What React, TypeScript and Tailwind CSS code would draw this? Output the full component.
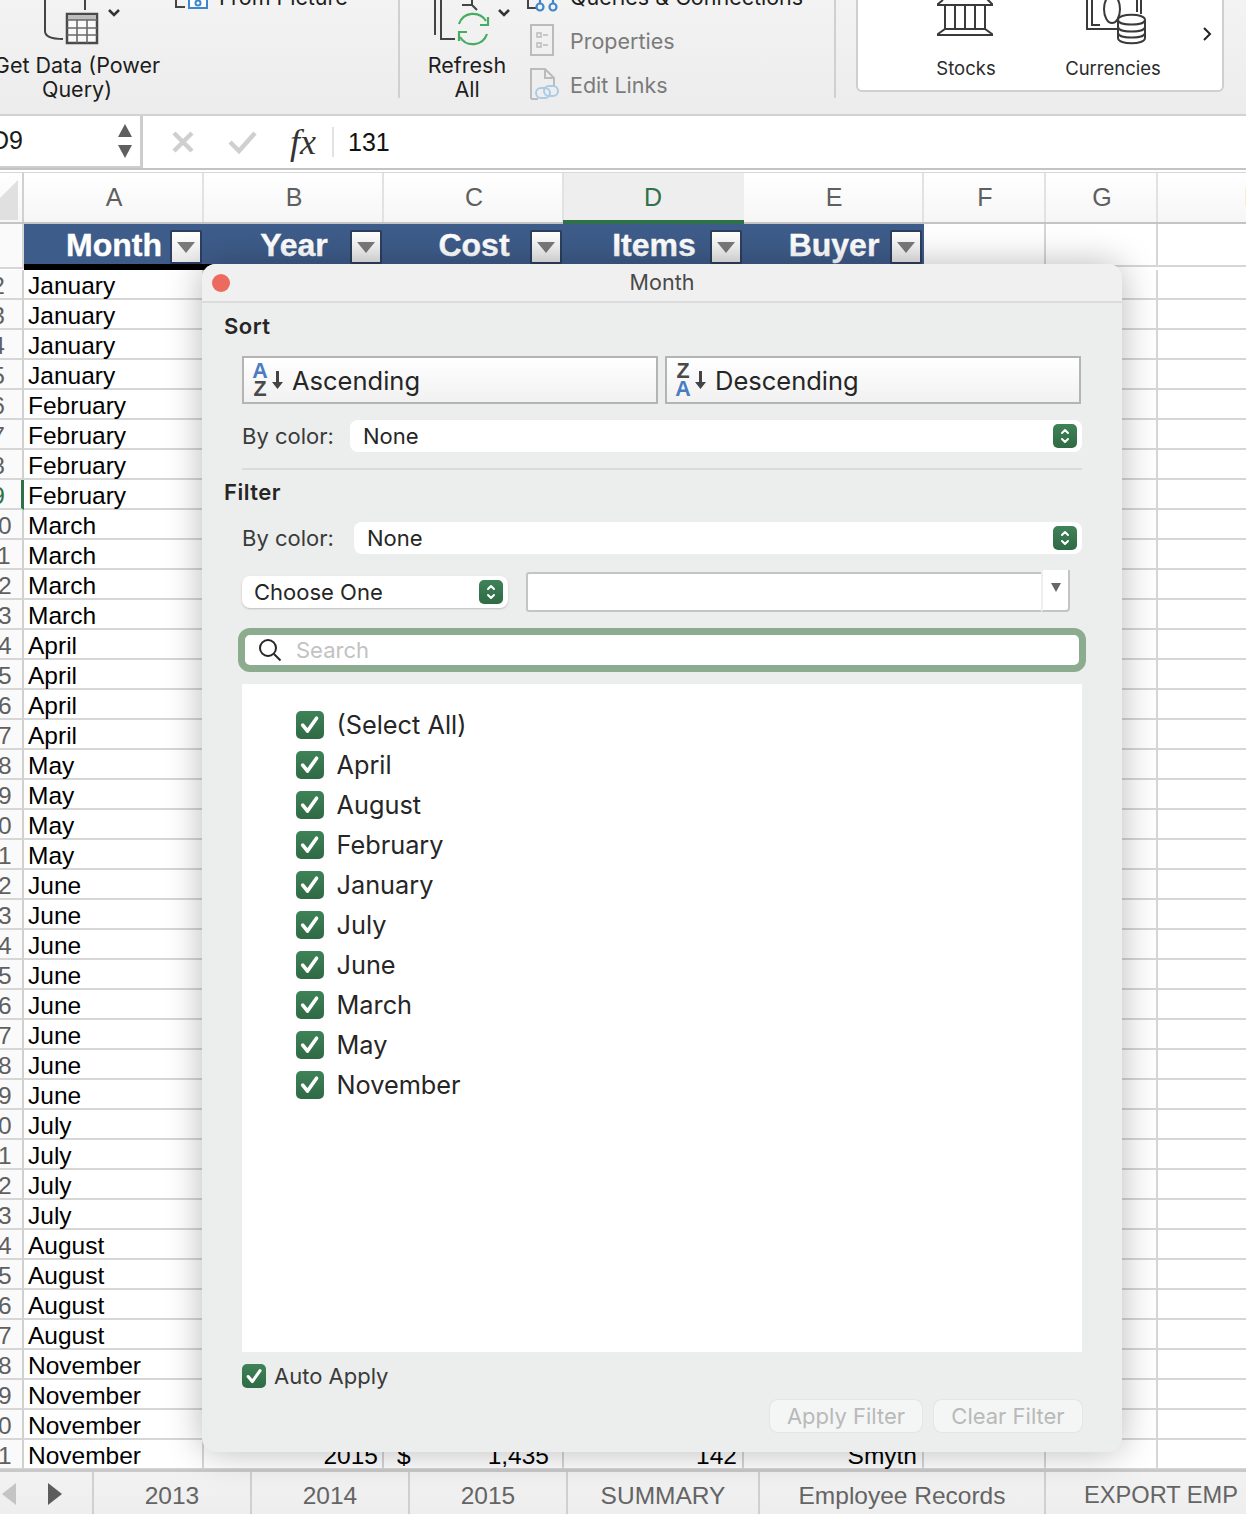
import React from 'react';

const months = [
  'January', 'January', 'January', 'January',
  'February', 'February', 'February', 'February',
  'March', 'March', 'March', 'March',
  'April', 'April', 'April', 'April',
  'May', 'May', 'May', 'May',
  'June', 'June', 'June', 'June', 'June', 'June', 'June', 'June',
  'July', 'July', 'July', 'July',
  'August', 'August', 'August', 'August',
  'November', 'November', 'November', 'November',
];

const filterItems = ['(Select All)', 'April', 'August', 'February', 'January', 'July', 'June', 'March', 'May', 'November'];

const columns = [
  { key: 'A', w: 'w-[180px]' },
  { key: 'B', w: 'w-[180px]' },
  { key: 'C', w: 'w-[180px]' },
  { key: 'D', w: 'w-[180px]' },
  { key: 'E', w: 'w-[180px]' },
  { key: 'F', w: 'w-[122px]' },
  { key: 'G', w: 'w-[112px]' },
  { key: 'H', w: 'w-[190px]' },
];

const tableHeaders = ['Month', 'Year', 'Cost', 'Items', 'Buyer'];
const tabs = [
  { label: '2013', w: 'w-[158px]', size: 'text-[24.500px]' },
  { label: '2014', w: 'w-[158px]', size: 'text-[24.500px]' },
  { label: '2015', w: 'w-[158px]', size: 'text-[24.500px]' },
  { label: 'SUMMARY', w: 'w-[192px]', size: 'text-[24.500px]' },
  { label: 'Employee Records', w: 'w-[286px]', size: 'text-[24.500px]' },
  { label: 'EXPORT EMP', w: 'w-[230px]', size: 'text-[23.600px]' },
];

function Stepper() {
  return (
    <span className="flex h-[24px] w-[24px] shrink-0 items-center justify-center rounded-[5px] bg-gradient-to-b from-[#3f8258] to-[#2f6a45]">
      <svg width="12" height="18" viewBox="0 0 12 18" fill="none" stroke="#fff" strokeWidth="2" strokeLinecap="round" strokeLinejoin="round">
        <path d="M3 6l3-3 3 3M3 12l3 3 3-3" />
      </svg>
    </span>
  );
}

function Check({ size }: { size: string }) {
  return (
    <span className={`flex shrink-0 items-center justify-center rounded-[5px] bg-gradient-to-b from-[#3f8258] to-[#2f6a45] ${size}`}>
      <svg className="h-[76%] w-[76%]" viewBox="0 0 20 20" fill="none" stroke="#fff" strokeWidth="3.4" strokeLinecap="round" strokeLinejoin="round">
        <path d="M3.5 10.5l4.5 5.5 8.5-12" />
      </svg>
    </span>
  );
}

function SortIcon({ top, bottom }: { top: string; bottom: string }) {
  return (
    <span className="flex items-center">
      <span className="flex w-[16px] flex-col items-center font-['Liberation_Sans',sans-serif] text-[21.500px] font-bold leading-[18px]">
        <span className={top === 'A' ? 'text-[#4a7cc0]' : 'text-[#4a4a4a]'}>{top}</span>
        <span className={bottom === 'A' ? 'text-[#4a7cc0]' : 'text-[#4a4a4a]'}>{bottom}</span>
      </span>
      <svg className="ml-[3px]" width="13" height="20" viewBox="0 0 13 20" fill="#444">
        <path d="M5 1h3v11h4l-5.500 7L1 12h4z" />
      </svg>
    </span>
  );
}

function Ribbon() {
  return (
    <div className="flex h-[116px] shrink-0 overflow-hidden border-b-2 border-[#d2d2d2] bg-gradient-to-b from-[#f3f3f3] to-[#ececec] text-[21.500px] leading-[24px] text-[#1d1d1d]">
      <div className="flex h-[98px] w-[400px] shrink-0 border-r-2 border-[#d0d0d0]">
        <div className="-ml-[8px] w-[170px] shrink-0 text-center">
          <svg className="block" width="170" height="53" viewBox="-8 0 170 53" fill="none">
            <path d="M45 0v31q0 8 18 8" stroke="#444" strokeWidth="2" />
            <path d="M85 0v10" stroke="#444" strokeWidth="2" />
            <rect x="67" y="14" width="30" height="29" fill="#fafafa" stroke="#4a4a4a" strokeWidth="2.500" />
            <rect x="68" y="15" width="28" height="5" fill="#bdbdbd" />
            <path d="M67 20h30M67 28h30M67 35h30M77 20v23M87 20v23" stroke="#6a6a6a" strokeWidth="1.600" />
            <path d="M109 10l5 5 5-5" stroke="#333" strokeWidth="2.500" />
          </svg>
          <div className="whitespace-nowrap">Get Data (Power</div>
          <div>Query)</div>
        </div>
        <div className="ml-[13px] -mt-[15px] flex h-[24px] items-center">
          <svg className="overflow-visible" width="34" height="24" viewBox="0 0 34 24" fill="none">
            <path d="M1 0v22h9" stroke="#444" strokeWidth="2" />
            <rect x="14" y="8" width="18" height="15" fill="#fff" stroke="#3f86cf" strokeWidth="2" />
            <circle cx="23" cy="18" r="2.500" stroke="#3f86cf" strokeWidth="2" />
          </svg>
          <span className="ml-[10px] whitespace-nowrap">From Picture</span>
        </div>
      </div>
      <div className="flex h-[98px] w-[436px] shrink-0 border-r-2 border-[#d0d0d0]">
        <div className="w-[132px] shrink-0">
          <svg className="block" width="132" height="53" viewBox="400 0 132 53" fill="none">
            <path d="M435 0v35M441 0v39h14" stroke="#444" strokeWidth="2" />
            <path d="M462 5h10M472 0v5l5 5" stroke="#444" strokeWidth="2" />
            <path d="M459 24a15 15 0 0 1 27-3M487 34a15 15 0 0 1-27 3" stroke="#46ad62" strokeWidth="2.200" />
            <path d="M488 17v8h-8M459 41v-9h8" stroke="#46ad62" strokeWidth="2.200" />
            <path d="M499 10l5 5 5-5" stroke="#333" strokeWidth="2.500" />
          </svg>
          <div className="w-[134px] text-center">Refresh</div>
          <div className="w-[134px] text-center">All</div>
        </div>
        <div className="-mt-[15px] flex flex-col gap-[20px] text-[#7b7b7b]">
          <div className="flex h-[24px] items-center text-[#1d1d1d]">
            <svg className="overflow-visible" width="38" height="24" viewBox="0 0 38 24" fill="none">
              <path d="M-4 0v23h8M-4 12h8" stroke="#444" strokeWidth="2" />
              <circle cx="8" cy="22" r="3.500" stroke="#3f86cf" strokeWidth="2.200" />
              <circle cx="21" cy="22" r="3.500" stroke="#3f86cf" strokeWidth="2.200" />
              <path d="M8 18v-4h13v4" stroke="#3f86cf" strokeWidth="2.200" />
            </svg>
            <span className="whitespace-nowrap">Queries &amp; Connections</span>
          </div>
          <div className="flex h-[24px] items-center">
            <svg className="shrink-0 overflow-visible" width="38" height="32" viewBox="532 25 38 32" fill="none">
              <rect x="531" y="25" width="22" height="30" stroke="#bbb" strokeWidth="2" />
              <path d="M537 33h4v4h-4zM537 43h4v4h-4z" stroke="#bbb" strokeWidth="1.500" />
              <path d="M543 35h5M543 45h5" stroke="#bbb" strokeWidth="1.500" />
            </svg>
            <span className="whitespace-nowrap">Properties</span>
          </div>
          <div className="flex h-[24px] items-center">
            <svg className="shrink-0 overflow-visible" width="38" height="34" viewBox="532 68 38 34" fill="none">
              <path d="M531 99V69h14l9 9v8M545 69v9h9M531 99h7" stroke="#bbb" strokeWidth="2" />
              <rect x="536" y="88" width="14" height="10" rx="5" stroke="#a9cbe8" strokeWidth="2" />
              <rect x="544" y="86" width="14" height="10" rx="5" stroke="#a9cbe8" strokeWidth="2" />
            </svg>
            <span className="whitespace-nowrap">Edit Links</span>
          </div>
        </div>
      </div>
      <div className="ml-[20px] flex h-[92px] w-[368px] shrink-0 rounded-b-[6px] border-x-2 border-b-2 border-[#cfcfcf] bg-white text-[18.500px] text-[#2b2b2b]">
        <div className="w-[216px] text-center">
          <svg className="block" width="216" height="56" viewBox="858 0 216 56" fill="none" stroke="#3a3a3a" strokeWidth="2">
            <path d="M943 0l-5 4v1h54V4l-5-5M945 5v24M955 5v24M965 5v24M975 5v24M985 5v24M945 29h40l7 5v1h-54v-1z" />
          </svg>
          <div className="leading-[24px]">Stocks</div>
        </div>
        <div className="w-[76px] text-center">
          <svg className="block overflow-visible" width="76" height="56" viewBox="1074 0 76 56" fill="none" stroke="#3a3a3a" strokeWidth="2">
            <path d="M1087 0v29h30M1092 0v25h8M1141 0v14M1137 0v12" />
            <ellipse cx="1112" cy="9" rx="8" ry="14" />
            <path d="M1118 20c0-7 27-7 27 0v18c0 7-27 7-27 0z" fill="#fff" />
            <path d="M1118 20c0 6 27 6 27 0M1118 27c0 6 27 6 27 0M1118 33c0 6 27 6 27 0" />
          </svg>
          <div className="-ml-[39px] w-[156px] leading-[24px]">Currencies</div>
        </div>
        <svg className="ml-[51px] mt-[26px]" width="12" height="16" viewBox="0 0 12 16" fill="none" stroke="#222" strokeWidth="2">
          <path d="M3 2l6 6-6 6" />
        </svg>
      </div>
    </div>
  );
}

function FormulaBar() {
  return (
    <div className="flex h-[52px] shrink-0 bg-white font-['Liberation_Sans',sans-serif]">
      <div className="relative flex w-[143px] shrink-0 items-center border-r-[3px] border-b-2 border-[#cdcdcd]">
        <span className="-ml-[9px] text-[25px] text-[#1a1a1a]">D9</span>
        <div className="ml-auto mr-[8px] flex flex-col gap-[8px]">
          <svg width="14" height="13" viewBox="0 0 14 13" fill="#5f5f5f"><path d="M7 0l7 13H0z" /></svg>
          <svg width="14" height="13" viewBox="0 0 14 13" fill="#5f5f5f"><path d="M7 13L14 0H0z" /></svg>
        </div>
      </div>
      <div className="flex flex-1 items-center">
        <svg className="ml-[28px]" width="24" height="24" viewBox="0 0 24 24" fill="none" stroke="#cfcfcf" strokeWidth="4.500">
          <path d="M3 3l18 18M21 3L3 21" />
        </svg>
        <svg className="ml-[33px]" width="30" height="24" viewBox="0 0 30 24" fill="none" stroke="#cfcfcf" strokeWidth="4.500">
          <path d="M2 12l9 9L27 3" />
        </svg>
        <span className="ml-[32px] w-[32px] font-['Liberation_Serif',serif] text-[36px] italic leading-none text-[#333]">fx</span>
        <span className="ml-[10px] h-[30px] w-[2px] bg-[#e2e2e2]" />
        <span className="ml-[14px] pt-[2px] text-[25px] text-[#111]">131</span>
      </div>
    </div>
  );
}

function ColumnHeaders() {
  return (
    <>
      <div className="h-[4px] shrink-0 border-t-2 border-[#c4c4c4] bg-white" />
      <div className="flex h-[52px] shrink-0 border-t border-b-2 border-t-[#d8d8d8] border-b-[#c4c4c4] bg-gradient-to-b from-white to-[#f6f6f6] font-['Liberation_Sans',sans-serif] text-[25px] text-[#5f5f5f]">
        <div className="flex w-[24px] shrink-0 items-center border-r-2 border-[#d0d0d0]">
          <svg width="18" height="46" viewBox="0 0 18 46" fill="#e0e0e0"><path d="M18 5v40H0V23z" /></svg>
        </div>
        {columns.map((c) => (
          <div
            key={c.key}
            className={`flex shrink-0 items-center justify-center border-r-2 pt-[1px] ${c.w} ${
              c.key === 'D' ? 'relative border-[#eeeeee] bg-[#eeeeee] text-[#2f7148]' : 'border-[#e2e2e2] pl-[2px]'
            }`}
          >
            {c.key}
            {c.key === 'D' && <span className="absolute -bottom-[2px] -left-[1px] -right-[2px] h-[4px] bg-[#2f7148]" />}
          </div>
        ))}
      </div>
    </>
  );
}

function RowNumber({ n, active }: { n: number; active?: boolean }) {
  return (
    <div
      className={`h-full w-[24px] shrink-0 overflow-hidden border-b-2 border-b-[#d6d6d6] bg-[#fafafa] ${
        active ? 'border-r-[3px] border-r-[#2f7148] text-[#2f7148]' : 'border-r-2 border-r-[#d0d0d0] text-[#5f5f5f]'
      }`}
    >
      <div className="-ml-[26px] w-[48px] text-center">{n}</div>
    </div>
  );
}

function TableHeaderRow() {
  return (
    <div className="flex h-[46px] shrink-0">
      <div className="h-[45px] w-[24px] shrink-0 border-r-2 border-b-2 border-[#d6d6d6] bg-[#fafafa]" />
      <div className="w-[900px] shrink-0">
        <div className="flex h-[40px] bg-[#3e5c8a] text-[32px] font-bold text-white [-webkit-text-stroke:0.4px_white]">
          {tableHeaders.map((h) => (
            <div key={h} className="relative flex w-[180px] items-center justify-center pt-[1px]">
              {h}
              <span className="absolute bottom-0 right-[2px] flex h-[34px] w-[32px] items-center justify-center rounded-[2px] border-2 border-[#2c3f60] bg-gradient-to-b from-white to-[#e9e9e9]">
                <svg width="18" height="11" viewBox="0 0 18 11" fill="#7a7a7a"><path d="M0 0h18l-9 11z" /></svg>
              </span>
            </div>
          ))}
        </div>
        <div className="h-[6px] bg-black" />
      </div>
      <div className="h-[43px] w-[122px] shrink-0 border-r-2 border-b-2 border-[#d6d6d6]" />
      <div className="h-[43px] w-[112px] shrink-0 border-r-2 border-b-2 border-[#d6d6d6]" />
      <div className="h-[43px] w-[190px] shrink-0 border-b-2 border-[#d6d6d6]" />
    </div>
  );
}

function Rows() {
  return (
    <div className="min-h-0 flex-1 overflow-hidden">
      {months.map((m, i) => {
        const isLast = i === months.length - 1;
        return (
          <div key={i} className="flex h-[30px] text-[24.500px] leading-[32px] text-black">
            <RowNumber n={i + 2} active={i === 7} />
            <div className="w-[180px] shrink-0 border-r-2 border-b-2 border-[#d6d6d6] pl-[4px]">{m}</div>
            <div className="w-[180px] shrink-0 border-r-2 border-b-2 border-[#d6d6d6] pr-[4px] text-right">{isLast ? '2015' : ''}</div>
            <div className="flex w-[180px] shrink-0 justify-between border-r-2 border-b-2 border-[#d6d6d6] px-[13px]">
              {isLast && (
                <>
                  <span>$</span>
                  <span>1,435</span>
                </>
              )}
            </div>
            <div className="w-[180px] shrink-0 border-r-2 border-b-2 border-[#d6d6d6] pr-[5px] text-right">{isLast ? '142' : ''}</div>
            <div className="w-[180px] shrink-0 border-r-2 border-b-2 border-[#d6d6d6] pr-[5px] text-right">{isLast ? 'Smyth' : ''}</div>
            <div className="w-[122px] shrink-0 border-r-2 border-b-2 border-[#d6d6d6]" />
            <div className="w-[112px] shrink-0 border-r-2 border-b-2 border-[#d6d6d6]" />
            <div className="w-[190px] shrink-0 border-b-2 border-[#d6d6d6]" />
          </div>
        );
      })}
    </div>
  );
}

function TabBar() {
  return (
    <div className="flex h-[45px] shrink-0 border-t-[3px] border-[#c9c9c9] bg-gradient-to-b from-[#f2f2f2] to-[#eeeeee] font-['Liberation_Sans',sans-serif] text-[#646464]">
      <div className="flex w-[94px] shrink-0 items-center border-r-2 border-[#d0d0d0] pl-[2px] pt-[2px]">
        <svg width="14" height="22" viewBox="0 0 14 22" fill="#c4c4c4"><path d="M14 0v22L0 11z" /></svg>
        <svg className="ml-[32px]" width="14" height="22" viewBox="0 0 14 22" fill="#5c5c5c"><path d="M0 0v22l14-11z" /></svg>
      </div>
      {tabs.map((t) => (
        <div key={t.label} className={`flex shrink-0 items-center justify-center border-r-2 border-[#d0d0d0] pt-[6px] last:border-r-0 ${t.w} ${t.size}`}>
          <span className="whitespace-nowrap">{t.label}</span>
        </div>
      ))}
    </div>
  );
}

function FilterDialog() {
  return (
    <div className="absolute left-[202px] top-[264px] flex h-[1188px] w-[920px] flex-col overflow-hidden rounded-[14px] bg-[#eceeed] font-['Inter',sans-serif] text-[#262626] shadow-[0_0_36px_rgba(0,0,0,0.28)]">
      <div className="relative flex h-[39px] shrink-0 items-center justify-center border-b-2 border-[#dcdcdc] bg-[#f0f0f0] text-[21.500px] text-[#4a4a4a]">
        <span className="absolute left-[10px] top-[10px] h-[18px] w-[18px] rounded-full bg-[#ec6a5e]" />
        Month
      </div>

      <div className="flex flex-1 flex-col pl-[22px] pr-[40px]">
        <div className="mt-[10px] text-[22px] font-semibold leading-[26px] tracking-[0.5px]">Sort</div>
        <div className="ml-[18px] mt-[17px] flex gap-[7px]">
          {[
            { label: 'Ascending', top: 'A', bottom: 'Z' },
            { label: 'Descending', top: 'Z', bottom: 'A' },
          ].map((b) => (
            <div key={b.label} className="flex h-[48px] w-[416px] items-center border-2 border-[#b4b4b4] bg-gradient-to-b from-white to-[#f1f1f1] pl-[8px] text-[25.500px]">
              <SortIcon top={b.top} bottom={b.bottom} />
              <span className="ml-[8px] pt-[2px]">{b.label}</span>
            </div>
          ))}
        </div>

        <div className="ml-[18px] mt-[16px] flex h-[32px] items-center text-[22px]">
          <span className="w-[108px] text-[#3a3a3a]">By color:</span>
          <div className="flex h-[32px] flex-1 items-center rounded-[8px] bg-white pl-[13px] pr-[5px]">
            <span className="flex-1">None</span>
            <Stepper />
          </div>
        </div>

        <div className="ml-[18px] mt-[16px] h-[2px] bg-[#dadcdb]" />
        <div className="mt-[9px] text-[22px] font-semibold leading-[26px] tracking-[0.5px]">Filter</div>

        <div className="ml-[18px] mt-[17px] flex h-[32px] items-center text-[22px]">
          <span className="w-[112px] text-[#3a3a3a]">By color:</span>
          <div className="flex h-[32px] flex-1 items-center rounded-[8px] bg-white pl-[13px] pr-[5px]">
            <span className="flex-1">None</span>
            <Stepper />
          </div>
        </div>

        <div className="ml-[18px] mt-[16px] flex h-[42px] items-start text-[22px]">
          <div className="mt-[6px] flex h-[32px] w-[266px] shrink-0 items-center rounded-[8px] bg-white pl-[12px] pr-[5px] shadow-[0_1px_2px_rgba(0,0,0,0.2)]">
            <span className="flex-1">Choose One</span>
            <Stepper />
          </div>
          <div className="ml-[18px] mt-[2px] h-[40px] w-[515px] rounded-l-[3px] border-y-2 border-l-2 border-[#c4c4c4] bg-white" />
          <div className="flex h-[42px] w-[29px] items-center justify-center rounded-br-[4px] border-r-2 border-b-2 border-l-2 border-r-[#c4c4c4] border-b-[#c4c4c4] border-l-[#eeeeee] bg-white pb-[6px]">
            <svg width="10" height="9" viewBox="0 0 10 9" fill="#666"><path d="M0 0h10L5 9z" /></svg>
          </div>
        </div>

        <div className="-mr-[4px] ml-[14px] mt-[16px] flex h-[44px] shrink-0 items-center rounded-[12px] border-[7px] border-[#8dab8f] bg-white pl-[13px] text-[22px] text-[#c2c2c2]">
          <svg width="24" height="24" viewBox="0 0 24 24" fill="none" stroke="#262626" strokeWidth="2">
            <circle cx="10" cy="10" r="8" />
            <path d="M16 16l6.500 6.500" />
          </svg>
          <span className="ml-[14px]">Search</span>
        </div>

        <div className="ml-[18px] mt-[12px] flex h-[668px] shrink-0 flex-col bg-white pl-[54px] pt-[21px]">
          {filterItems.map((item) => (
            <div key={item} className="flex h-[40px] shrink-0 items-center text-[25.300px]">
              <Check size="h-[28px] w-[28px]" />
              <span className="ml-[12.500px]">{item}</span>
            </div>
          ))}
        </div>

        <div className="ml-[18px] mt-[12px] flex h-[24px] items-center text-[22px] text-[#3a3a3a]">
          <Check size="h-[24px] w-[24px]" />
          <span className="ml-[8px]">Auto Apply</span>
        </div>

        <div className="mt-[12px] flex justify-end gap-[12px] text-[22px] text-[#b9b9b9]">
          <div className="flex h-[32px] w-[152px] items-center justify-center rounded-[8px] bg-[#f4f6f5] shadow-[0_0_2px_rgba(0,0,0,0.12)]">Apply Filter</div>
          <div className="flex h-[32px] w-[148px] items-center justify-center rounded-[8px] bg-[#f4f6f5] shadow-[0_0_2px_rgba(0,0,0,0.12)]">Clear Filter</div>
        </div>
      </div>
    </div>
  );
}

export default function App() {
  return (
    <div className="relative flex h-[1514px] w-[1246px] flex-col overflow-hidden bg-white font-['Inter',sans-serif]">
      <Ribbon />
      <FormulaBar />
      <ColumnHeaders />
      <div className="flex min-h-0 flex-1 flex-col font-['Liberation_Sans',sans-serif]">
        <TableHeaderRow />
        <Rows />
      </div>
      <TabBar />
      <FilterDialog />
    </div>
  );
}
